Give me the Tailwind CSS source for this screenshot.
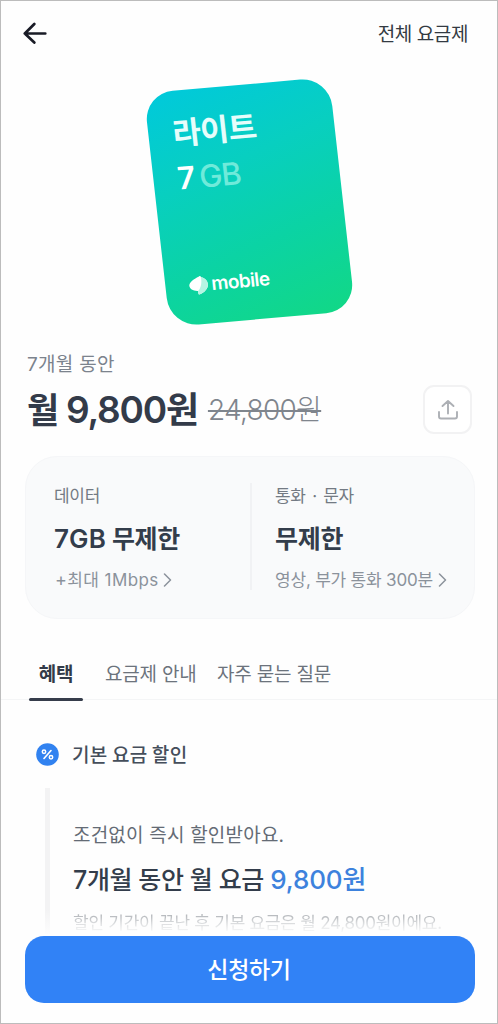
<!DOCTYPE html>
<html lang="ko">
<head>
<meta charset="utf-8">
<meta name="viewport" content="width=device-width, initial-scale=1">
<title>라이트 7GB</title>
<script src="https://cdn.jsdelivr.net/npm/@tailwindcss/browser@4"></script>
</head>
<body class="bg-white">
<div class="relative flex h-[1024px] w-[498px] flex-col overflow-hidden border border-[#bcbcbc] bg-[#fefefe] font-['Inter','Noto_Sans_CJK_KR',sans-serif] whitespace-nowrap text-[#333d4b]">

  <header class="flex h-[64px] shrink-0 items-center justify-between pr-[29px] pl-[22px]">
    <svg class="h-[22px] w-[24px]" viewBox="0 0 24 22" fill="none" stroke="#191b26" stroke-width="2.700" stroke-linecap="round" stroke-linejoin="round"><path d="M22.300 11.500H1.800M11.300 2L1.800 11.500l9.500 9"/></svg>
    <span class="pt-[3px] text-[19px] leading-6 tracking-[-0.4px] text-[#333a42]">전체 요금제</span>
  </header>

  <section class="flex h-[274px] shrink-0 justify-center pt-[19px]">
    <div class="flex h-[235px] w-[186px] [transform:translate(0.5px,0.5px)_rotate(-5deg)_skewX(1.4deg)] flex-col rounded-[29px] bg-[linear-gradient(160deg,#00c9dc_0%,#08cfc0_35%,#0bd3a4_65%,#12d885_100%)] pt-[23px] pl-[24px] text-white">
      <div class="h-[40px] text-[31px] leading-[40px] font-semibold tracking-[-0.5px] text-[#e6fdfb]">라이트</div>
      <div class="mt-[5px] flex h-[40px] gap-[4px] text-[31px] leading-[40px]"><span class="font-semibold">7</span><span class="font-medium tracking-[-1.2px] text-[#6feada]">GB</span></div>
      <div class="mt-[76px] -ml-px flex h-[24px] items-center gap-[3px]">
        <svg class="h-[20px] w-[20px]" viewBox="0 0 20 20"><path d="M11.500 1.200C12.500.5 13.300 1 13.300 2.200c3.700 1 6.200 3.800 6.200 7.300 0 4.500-4.300 8-9 9.700-1 .3-1.500-.2-1.500-1.200v-2.300C4 15.500.8 13 .8 9.800.8 6.500 5.500 3.500 11.500 1.200z" fill="#fff"/><path d="M13.300 2.200c3.700 1 6.200 3.800 6.200 7.300 0 4.500-4.300 8-9 9.700-1 .3-1.500-.2-1.500-1.200v-2.300c3.500-3.200 4.800-8.200 4.300-13.500z" fill="#b5f5e3"/></svg>
        <span class="text-[19px] leading-[24px] font-semibold tracking-[-0.6px]">mobile</span>
      </div>
    </div>
  </section>

  <section class="flex h-[117px] shrink-0 items-end justify-between pr-[25px] pl-[26px]">
    <div class="h-full pt-[14px]">
      <div class="h-[24px] text-[19px] leading-6 tracking-[0.3px] text-[#7c838d]">7개월 동안</div>
      <div class="mt-[11px] flex h-[44px] items-center gap-[10px]">
        <span class="text-[37px] leading-[44px] font-semibold tracking-[-1.2px] text-[#333b49]"><span class="text-[35px]">월</span><span class="inline-block w-[8px]"> </span>9,800<span class="text-[36px]">원</span></span>
        <span class="text-[28px] leading-[44px] font-light tracking-[-0.7px] text-[#7f858d] line-through decoration-[2px]">24,800원</span>
      </div>
    </div>
    <button class="mb-[22px] flex h-[49px] w-[49px] items-center justify-center rounded-[11px] border-2 border-[#f2f2f3] bg-white">
      <svg class="h-[22px] w-[22px]" viewBox="0 0 22 22" fill="none" stroke="#adb0b5" stroke-width="1.900" stroke-linecap="round" stroke-linejoin="round"><path d="M11 14.500V2.500M5.500 7L11 2l5.500 5M2 13v4.500a2 2 0 0 0 2 2h14a2 2 0 0 0 2-2V13"/></svg>
    </button>
  </section>

  <section class="mr-[22px] ml-[24px] flex h-[163px] shrink-0 rounded-[32px] border border-[#f5f6f8] bg-[#f9fafb] pt-[26px] pb-[24px]">
    <div class="relative w-[226px] pl-[28px]">
      <span class="absolute top-0 right-0 h-[107px] w-[2px] bg-[#f1f2f4]"></span>
      <div class="text-[17px] leading-[26px] tracking-[-0.3px] text-[#737a83]">데이터</div>
      <div class="mt-[14px] text-[25px] leading-[32px] font-semibold tracking-[-0.3px]"><span class="text-[26px] tracking-[0.1px]">7GB</span> 무제한</div>
      <div class="mt-[12px] flex items-center gap-[4px] pl-px text-[17px] leading-[26px] tracking-[0.4px] text-[#8b929b]"><span><span class="text-[18px]">+</span>최대 1Mbps</span>
        <svg class="h-[14px] w-[9px]" viewBox="0 0 9 14" fill="none" stroke="#8b929b" stroke-width="1.500" stroke-linecap="round" stroke-linejoin="round"><path d="M1.500 1L7.500 7l-6 6"/></svg>
      </div>
    </div>
    <div class="pl-[23px]">
      <div class="text-[17px] leading-[26px] tracking-[-0.3px] [word-spacing:2px] text-[#737a83]">통화 · 문자</div>
      <div class="mt-[14px] text-[25px] leading-[32px] font-semibold tracking-[-0.3px]">무제한</div>
      <div class="mt-[12px] flex items-center gap-[5px] text-[17px] leading-[26px] tracking-[-0.2px] text-[#8b929b]"><span>영상, 부가 통화 300분</span>
        <svg class="h-[14px] w-[9px]" viewBox="0 0 9 14" fill="none" stroke="#8b929b" stroke-width="1.500" stroke-linecap="round" stroke-linejoin="round"><path d="M1.500 1L7.500 7l-6 6"/></svg>
      </div>
    </div>
  </section>

  <nav class="mt-[27px] flex h-[54px] shrink-0 border-b border-[#f4f5f6] pl-[28px] text-[19px] leading-[57px] tracking-[-0.2px] text-[#6c737c]">
    <div class="relative w-[54px] text-center font-semibold text-[#333b49]">혜택<span class="absolute right-0 -bottom-[2px] left-0 h-[3px] rounded-full bg-[#363d4b]"></span></div>
    <div class="ml-[22px] w-[112px]">요금제 안내</div>
    <div>자주 묻는 질문</div>
  </nav>

  <section class="shrink-0 pt-[40px] pl-[35px]">
    <div class="flex h-[28px] items-center gap-[13px]">
      <svg class="h-[23px] w-[23px]" viewBox="0 0 23 23" fill="none"><circle cx="11.500" cy="11.500" r="11.300" fill="#3182f0"/><path d="M15 7.500l-7 8" stroke="#fff" stroke-width="1.600" stroke-linecap="round"/><circle cx="8" cy="8.800" r="1.700" stroke="#fff" stroke-width="1.500"/><circle cx="15" cy="14.300" r="1.700" stroke="#fff" stroke-width="1.500"/></svg>
      <span class="pt-[3px] text-[19px] leading-7 font-medium tracking-[0.3px] [word-spacing:-1px] text-[#454e5b]">기본 요금 할인</span>
    </div>
    <div class="mt-[20px] ml-[9px] h-[146px] border-l-[5px] border-[#f3f3f4] pt-[34px] pl-[23px]">
      <div class="text-[19px] leading-[28px] tracking-[0.2px] text-[#646b75]">조건없이 즉시 할인받아요.</div>
      <div class="mt-[13px] text-[25px] leading-[34px] font-medium tracking-[-0.4px]">7개월 동안 월 요금 <span class="text-[26px] tracking-[-0.1px] text-[#3d82dd]">9,800원</span></div>
      <div class="mt-[14px] bg-gradient-to-b from-[#a4a8ad] from-30% to-[#d4d6d8] to-85% bg-clip-text text-[17px] leading-[24px] tracking-[-0.25px] text-transparent">할인 기간이 끝난 후 기본 요금은 월 24,800원이에요.</div>
    </div>
  </section>

  <div class="absolute inset-x-0 bottom-0 flex h-[114px] flex-col bg-gradient-to-b from-[#fefefe]/0 to-[#fefefe] to-25% pt-[27px] pr-[22px] pl-[24px]">
    <button class="h-[67px] w-full rounded-[19px] bg-[#3182f6] pr-[2px] text-center text-[23px] leading-[69px] font-medium tracking-[-0.3px] text-white">신청하기</button>
  </div>
</div>
</body>
</html>
